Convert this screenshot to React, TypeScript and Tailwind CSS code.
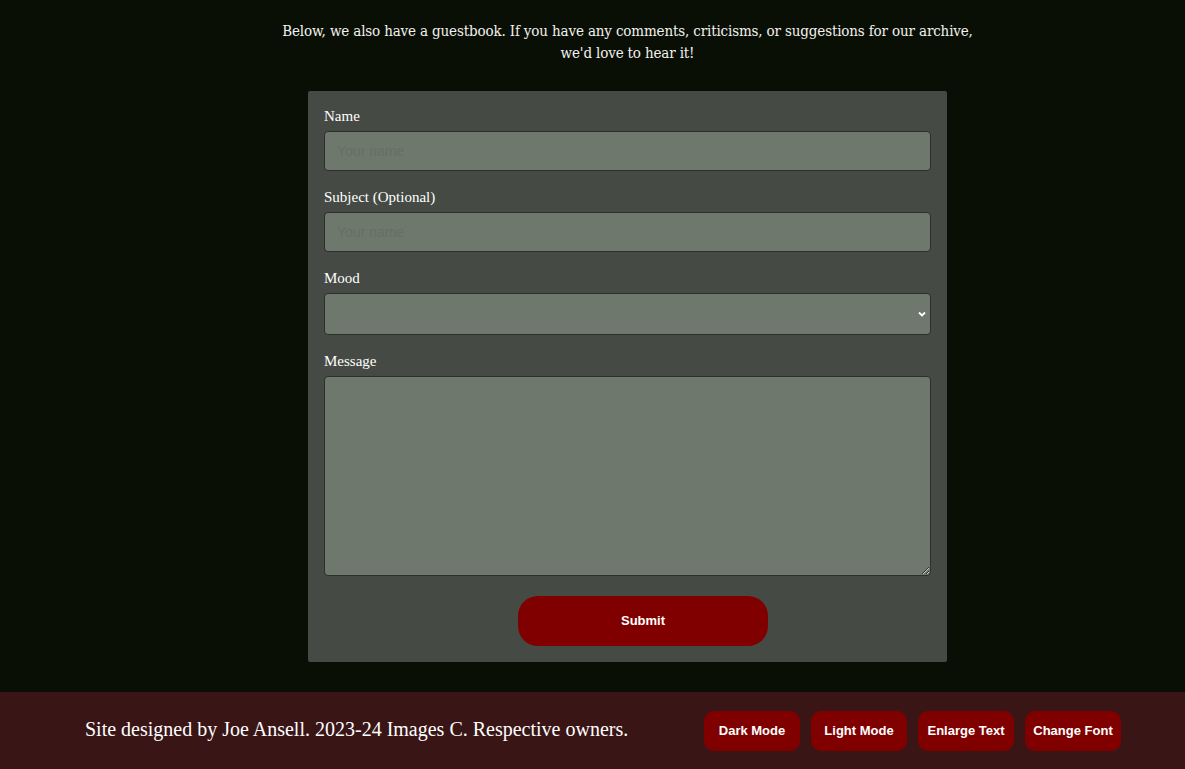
export default function App() {
  const label = "block text-[15px] leading-none text-white mb-[7px]";
  const field =
    "w-full rounded-[4px] border border-[#2c2f2b] bg-[#6e786c] px-[12px] text-[14px] text-white placeholder:text-[#667063] outline-none";
  const sans = { fontFamily: '"Liberation Sans", Arial, sans-serif' };
  return (
    <div className="min-h-screen bg-[#0a0f06] flex flex-col" style={{ fontFamily: '"Liberation Serif", "Times New Roman", serif' }}>
      <main className="flex flex-col items-center pl-[70px] pt-[20px] pb-[30px]">
        <p
          className="w-[720px] text-center text-[15px] leading-[22px] text-[#f2f2ee] font-medium"
          style={{ fontFamily: '"DejaVu Serif Condensed", "DejaVu Serif", serif', letterSpacing: "-0.15px" }}
        >
          Below, we also have a guestbook. If you have any comments, criticisms, or suggestions for our archive,
          we'd love to hear it!
        </p>
        <form className="mt-[27px] w-[639px] bg-[#454a44] px-[16px] pt-[18px] pb-[16px] rounded-[2px]" onSubmit={(e) => e.preventDefault()}>
          <label className={label}>Name</label>
          <input className={`${field} h-[40px]`} placeholder="Your name" style={sans} />
          <label className={`${label} mt-[19px]`}>Subject (Optional)</label>
          <input className={`${field} h-[40px]`} placeholder="Your name" style={sans} />
          <label className={`${label} mt-[19px]`}>Mood</label>
          <div className="relative">
            <select className={`${field} h-[42px] appearance-none`} style={sans} defaultValue="">
              <option value=""></option>
            </select>
            <svg className="absolute right-[4px] top-[16px] w-[10px] h-[10px] pointer-events-none" viewBox="0 0 10 10">
              <path d="M2 3.5 L5 6.5 L8 3.5" stroke="white" strokeWidth="1.8" fill="none" />
            </svg>
          </div>
          <label className={`${label} mt-[19px]`}>Message</label>
          <textarea className={`${field} h-[200px] block py-2`} style={sans} />
          <div className="flex justify-center mt-[20px] pl-[31px]">
            <button
              type="submit"
              className="w-[250px] h-[50px] rounded-[20px] bg-[#800000] text-white text-[13px] font-bold"
              style={sans}
            >
              Submit
            </button>
          </div>
        </form>
      </main>
      <footer className="mt-auto h-[77px] bg-[#3a1516] flex items-center justify-between pl-[85px] pr-[64px]">
        <p className="text-[20px] text-white -mt-[4px]">Site designed by Joe Ansell. 2023-24 Images C. Respective owners.</p>
        <div className="flex gap-[11px]" style={sans}>
          {["Dark Mode", "Light Mode", "Enlarge Text", "Change Font"].map((t) => (
            <button key={t} className="w-[96px] h-[40px] rounded-[10px] bg-[#800000] text-white text-[13px] font-bold">
              {t}
            </button>
          ))}
        </div>
      </footer>
    </div>
  );
}
